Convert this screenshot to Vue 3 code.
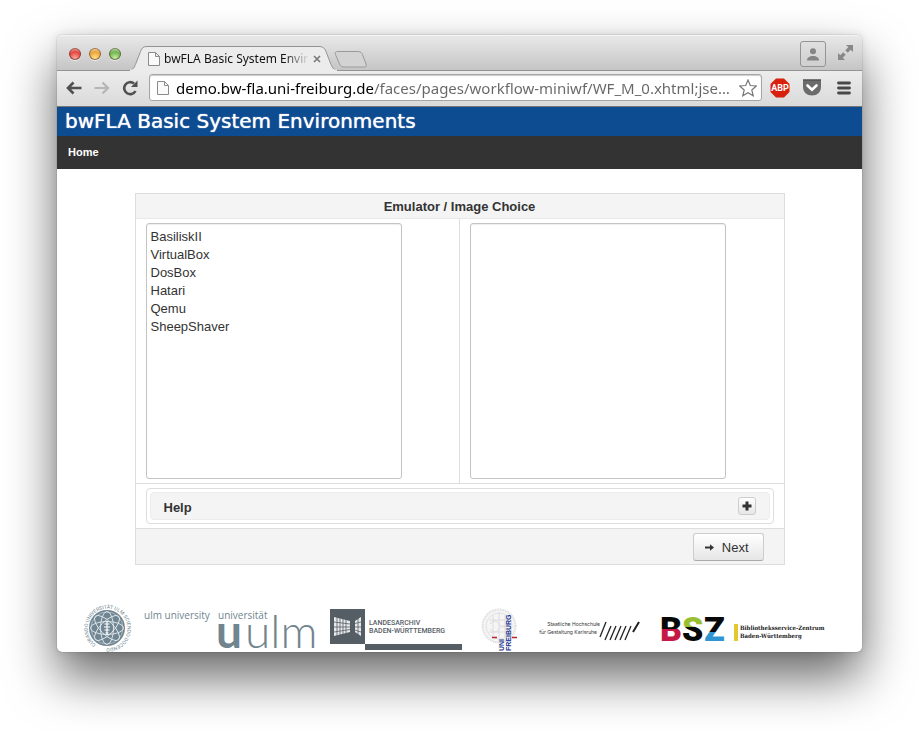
<script setup>
import { ref } from 'vue'

const emulators = ['BasiliskII', 'VirtualBox', 'DosBox', 'Hatari', 'Qemu', 'SheepShaver']
const selected = ref('')
const address = ref('demo.bw-fla.uni-freiburg.de/faces/pages/workflow-miniwf/WF_M_0.xhtml;jse…')
const petals = [0, 45, 90, 135]
const strokes = [0, 1, 2, 3, 4, 5, 6]
</script>

<template>
  <div class="desktop">
    <div class="window">
      <div class="titlebar">
        <div class="lights">
          <button class="light red" aria-label="Close"></button>
          <button class="light amber" aria-label="Minimize"></button>
          <button class="light green" aria-label="Zoom"></button>
        </div>
        <div class="tab">
          <svg class="tab-shape" viewBox="0 0 212 25" width="212" height="25" aria-hidden="true">
            <path d="M0 24.5 C5 24.5 6 22 7.500 18.500 L12.500 5.500 C14 2 15 .5 19 .5 H191 C195 .5 196.500 2 198 5.500 L203 18.500 C204.500 22 206 24.500 211 24.500" fill="#ececec" stroke="#949494" />
            <path d="M2 24.500 H209" stroke="#ececec" stroke-width="2" />
          </svg>
          <svg class="doc" viewBox="0 0 12 14" width="12" height="14" aria-hidden="true">
            <path d="M.5 .5 H7.500 L11.500 4.500 V13.500 H.5 Z M7.500 .5 V4.500 H11.500" fill="#fafafa" stroke="#8b8b8b" />
          </svg>
          <span class="tab-title">bwFLA Basic System Environments</span>
          <button class="tab-close" aria-label="Close tab">
            <svg viewBox="0 0 8 8" width="8" height="8"><path d="M1 1 L7 7 M7 1 L1 7" stroke="#777" stroke-width="1.600" /></svg>
          </button>
        </div>
        <button class="new-tab" aria-label="New tab">
          <svg viewBox="0 0 34 17" width="34" height="17">
            <path d="M3.500 .5 H24 C26.500 .5 27.500 1.500 28.500 3.500 L32 13 C32.700 15 32 16 30.500 16 H10 C7.500 16 6.500 15 5.500 13 L1.500 3.500 C.8 1.500 1.500 .5 3.500 .5 Z" fill="#d3d3d3" stroke="#9a9a9a" />
          </svg>
        </button>
        <div class="spacer"></div>
        <button class="profile" aria-label="Profile">
          <svg viewBox="0 0 14 13" width="14" height="13"><circle cx="7" cy="3.200" r="3" fill="#858585" /><path d="M1 12.500 C1 9.500 3.500 8 7 8 C10.500 8 13 9.500 13 12.500 Z" fill="#858585" /></svg>
        </button>
        <button class="expand" aria-label="Full screen">
          <svg viewBox="0 0 15 15" width="15" height="15" fill="#888"><path d="M8 0 H15 V7 L12.700 4.700 L9.700 7.700 L7.300 5.300 L10.300 2.300 Z" /><path d="M0 8 L2.300 10.300 L5.300 7.300 L7.700 9.700 L4.700 12.700 L7 15 H0 Z" /></svg>
        </button>
      </div>

      <div class="toolbar">
        <button class="nav" aria-label="Back">
          <svg viewBox="0 0 16 14" width="16" height="14"><path d="M7.500 1.500 L2 7 L7.500 12.500 M2.500 7 H15.500" fill="none" stroke="#505050" stroke-width="2.600" /></svg>
        </button>
        <button class="nav" aria-label="Forward">
          <svg viewBox="0 0 16 14" width="16" height="14"><path d="M8.500 1.500 L14 7 L8.500 12.500 M13.500 7 H.5" fill="none" stroke="#b5b5b5" stroke-width="2.200" /></svg>
        </button>
        <button class="nav" aria-label="Reload">
          <svg viewBox="0 0 16 16" width="16" height="16"><path d="M13.500 11 A6 6 0 1 1 12 3.500" fill="none" stroke="#505050" stroke-width="2.600" /><path d="M15.500 .5 V7 H9 Z" fill="#505050" /></svg>
        </button>
        <div class="omnibox">
          <svg class="doc" viewBox="0 0 12 14" width="12" height="14" aria-hidden="true">
            <path d="M.5 .5 H7.500 L11.500 4.500 V13.500 H.5 Z M7.500 .5 V4.500 H11.500" fill="#fafafa" stroke="#8b8b8b" />
          </svg>
          <input v-model="address" class="address" type="text" aria-label="Address" spellcheck="false" />
          <button class="star" aria-label="Bookmark">
            <svg viewBox="0 0 18 18" width="18" height="18"><path d="M9 1 L11.300 6.500 L17.300 7 L12.800 11 L14.200 16.800 L9 13.700 L3.800 16.800 L5.200 11 L.7 7 L6.700 6.500 Z" fill="#fff" stroke="#777" stroke-width="1.200" /></svg>
          </button>
        </div>
        <button class="nav abp" aria-label="Adblock Plus">
          <svg viewBox="0 0 20 20" width="20" height="20"><path d="M6 .5 H14 L19.500 6 V14 L14 19.500 H6 L.5 14 V6 Z" fill="#d8210d" /><text x="10" y="13" text-anchor="middle" class="abp-text">ABP</text></svg>
        </button>
        <button class="nav pocket" aria-label="Pocket">
          <svg viewBox="0 0 20 17" width="20" height="17"><path d="M1 .5 H19 V8 C19 13 15 16.500 10 16.500 C5 16.500 1 13 1 8 Z" fill="#6b6b6b" /><path d="M1 1 H19" stroke="#444" /><path d="M5.500 6.500 L10 10.800 L14.500 6.500" fill="none" stroke="#fff" stroke-width="2.600" stroke-linecap="round" /></svg>
        </button>
        <button class="nav menu" aria-label="Menu">
          <svg viewBox="0 0 14 14" width="14" height="14"><path d="M1.500 2 H12.500 M1.500 7 H12.500 M1.500 12 H12.500" stroke="#484848" stroke-width="2.800" stroke-linecap="round" /></svg>
        </button>
      </div>

      <header class="banner"><h1>bwFLA Basic System Environments</h1></header>
      <nav class="site-nav"><a href="#">Home</a></nav>

      <main>
        <section class="panel">
          <h2>Emulator / Image Choice</h2>
          <div class="choices">
            <div class="cell">
              <select v-model="selected" size="14" aria-label="Emulator">
                <option v-for="name in emulators" :key="name" :value="name">{{ name }}</option>
              </select>
            </div>
            <div class="cell">
              <select size="14" aria-label="Image"></select>
            </div>
          </div>
          <div class="help-row">
            <div class="help">
              <div class="help-head">
                <span>Help</span>
                <button class="toggle" aria-label="Expand help">
                  <svg viewBox="0 0 10 10" width="10" height="10"><path d="M5 .5 V9.500 M.5 5 H9.500" stroke="#333" stroke-width="3" /></svg>
                </button>
              </div>
            </div>
          </div>
          <div class="actions">
            <button class="next">
              <svg viewBox="0 0 9 7" width="9" height="7" aria-hidden="true"><path d="M0 2.500 H5 V.3 L9 3.500 L5 6.700 V4.500 H0 Z" fill="#333" /></svg>
              <span>Next</span>
            </button>
          </div>
        </section>
      </main>

      <footer class="partners">
        <svg class="seal" viewBox="0 0 48 48" width="48" height="48" role="img" aria-label="Universität Ulm seal">
          <defs><path id="ring" d="M13 40.500 A19.800 19.800 0 1 1 13.500 40.850" /></defs>
          <circle cx="24" cy="24" r="18" fill="#6f8592" />
          <g fill="none" stroke="#e4eaed" stroke-width=".9">
            <ellipse v-for="a in petals" :key="a" cx="24" cy="24" rx="16.500" ry="6.500" :transform="`rotate(${a} 24 24)`" />
            <circle cx="24" cy="24" r="16" stroke-width=".5" />
          </g>
          <path d="M24 17 V31 M21.500 20 H26.500 M21 23 H27 M21.500 26 H26.500 M22.500 29 H25.500" stroke="#fff" stroke-width="1.200" />
          <text class="ring-text"><textPath href="#ring">CURANDO·UNIVERSITÄT ULM·SCIENDO·DOCENDO</textPath></text>
        </svg>

        <svg class="uulm" viewBox="0 0 173 48" width="173" height="48" role="img" aria-label="ulm university universität uulm">
          <g fill="#71858f">
            <text x="0" y="15" class="uulm-small">ulm university</text>
            <text x="74" y="15" class="uulm-small">universität</text>
            <text x="72" y="44" class="uulm-bold">u</text>
            <text x="101" y="44" class="uulm-thin">ulm</text>
          </g>
        </svg>

        <svg class="archive" viewBox="0 0 137 48" width="137" height="48" role="img" aria-label="Landesarchiv Baden-Württemberg">
          <rect x="0" y="5" width="35" height="35" fill="#555e65" />
          <path d="M4 13 L20 17 V28 L4 32 Z M31 13 L25 17 V28 L31 32 Z" fill="#e8eaeb" />
          <path d="M7 13 V32 M10 14 V31 M13 15 V30 M16 16 V29 M4 18 L20 20 M4 23 H20 M4 28 L20 25.500 M28 14 V31 M31 18 L23 20 M31 23 H23 M31 28 L23 25.500" stroke="#555e65" stroke-width=".8" />
          <rect x="35" y="40" width="97" height="6" fill="#555e65" />
          <text x="39" y="21" class="archive-text">LANDESARCHIV</text>
          <text x="39" y="29" class="archive-text">BADEN-WÜRTTEMBERG</text>
        </svg>

        <svg class="freiburg" viewBox="0 0 44 48" width="44" height="48" role="img" aria-label="Uni Freiburg">
          <g fill="none" stroke="#dcdcdf">
            <circle cx="19" cy="22" r="16.500" stroke-width="2" stroke-dasharray="1 .7" fill="#f5f5f6" />
            <circle cx="19" cy="22" r="13" stroke-width=".8" />
            <path d="M13 11 V33 M25 11 V33 M9 16 H29 M9 28 H29 M19 8 V34 M10 20 Q15 14 19 20 T28 20 M10 25 Q15 31 19 25 T28 25" />
          </g>
          <path d="M12 33.500 H17 M32 33.500 H37" stroke="#b92431" stroke-width="1.500" />
          <text transform="translate(24 47) rotate(-90)" class="uni">UNI</text>
          <text transform="translate(31 47) rotate(-90)" class="uni">FREIBURG</text>
        </svg>

        <svg class="hfg" viewBox="0 0 110 48" width="110" height="48" role="img" aria-label="Staatliche Hochschule für Gestaltung Karlsruhe">
          <text x="63" y="22" text-anchor="end" class="hfg-text">Staatliche Hochschule</text>
          <text x="60" y="30" text-anchor="end" class="hfg-text">für Gestaltung Karlsruhe</text>
          <path v-for="n in strokes" :key="n" :d="n === 0 ? 'M63 33 L69 18' : n === 6 ? 'M96 28 L102 18' : `M${63 + n * 5} 36 L${69 + n * 5} 22`" stroke="#222" :stroke-width="n === 6 ? 2 : 1.3" />
        </svg>

        <svg class="bsz" viewBox="0 0 173 48" width="173" height="48" role="img" aria-label="BSZ Bibliotheksservice-Zentrum Baden-Württemberg">
          <defs>
            <linearGradient id="b-fill" x1="0" y1="14" x2="0" y2="38" gradientUnits="userSpaceOnUse"><stop offset=".46" stop-color="#080808" /><stop offset=".46" stop-color="#c41846" /></linearGradient>
            <linearGradient id="s-fill" x1="0" y1="14" x2="0" y2="38" gradientUnits="userSpaceOnUse"><stop offset=".38" stop-color="#98bf2f" /><stop offset=".38" stop-color="#080808" /></linearGradient>
            <linearGradient id="z-fill" x1="0" y1="14" x2="0" y2="38" gradientUnits="userSpaceOnUse"><stop offset=".58" stop-color="#080808" /><stop offset=".58" stop-color="#2f94d2" /></linearGradient>
          </defs>
          <text x="0" y="37" class="bsz-letter" fill="url(#b-fill)">B</text>
          <text x="22" y="37" class="bsz-letter" fill="url(#s-fill)">S</text>
          <text x="44" y="37" class="bsz-letter" fill="url(#z-fill)">Z</text>
          <rect x="74" y="20" width="4" height="17" fill="#e3c92c" />
          <text x="80" y="26" class="bsz-text">Bibliotheksservice-Zentrum</text>
          <text x="80" y="34" class="bsz-text">Baden-Württemberg</text>
        </svg>
      </footer>
    </div>
  </div>
</template>

<style>
body {
  background: #fff;
}
</style>

<style scoped>
* {
  box-sizing: border-box;
}
.desktop {
  padding: 35px 57px 79px;
  overflow: hidden;
  font-family: "Liberation Sans", Arial, sans-serif;
  font-size: 13px;
  color: #333;
}
button {
  margin: 0;
  padding: 0;
  border: 0;
  background: none;
  font: inherit;
  color: inherit;
}
svg {
  display: block;
}
.window {
  border-radius: 5px;
  background: #fff;
  box-shadow: 0 0 1px rgba(0, 0, 0, 0.6), 0 0 10px rgba(0, 0, 0, 0.1), 0 25px 50px rgba(0, 0, 0, 0.6);
}
.titlebar {
  display: flex;
  align-items: flex-end;
  height: 36px;
  padding: 0 9px 0 12px;
  border-bottom: 1px solid #949494;
  border-radius: 5px 5px 0 0;
  background: linear-gradient(#e9e9e9, #c5c5c5);
  box-shadow: inset 0 1px #f4f4f4;
}
.lights {
  display: flex;
  gap: 8px;
  padding-bottom: 10px;
}
.light {
  width: 12px;
  height: 12px;
  border: 1px solid rgba(60, 30, 20, 0.5);
  border-radius: 50%;
  box-shadow: 0 1px #eee;
}
.red {
  background: radial-gradient(circle at 50% 90%, #ffaaa0, #e4443f 60%, #f3b5b0);
}
.amber {
  background: radial-gradient(circle at 50% 90%, #ffe58c, #eba23c 60%, #f9dfb8);
}
.green {
  background: radial-gradient(circle at 50% 90%, #c8f0a0, #6fb350 60%, #d0e8c4);
}
.tab {
  position: relative;
  display: flex;
  align-items: center;
  width: 212px;
  height: 25px;
  margin: 0 0 -1px 7px;
  padding: 0 12px 0 20px;
}
.tab-shape {
  position: absolute;
  inset: 0;
}
.doc,
.tab-title,
.tab-close {
  position: relative;
  flex: none;
}
.tab-title {
  width: 144px;
  margin: 0 5px 0 4px;
  overflow: hidden;
  white-space: nowrap;
  font: 12px/18px "Noto Sans", sans-serif;
  color: #111;
  -webkit-mask-image: linear-gradient(to right, #000 120px, transparent 146px);
  mask-image: linear-gradient(to right, #000 120px, transparent 146px);
}
.new-tab {
  margin-left: -6px;
  padding-bottom: 2px;
}
.spacer {
  flex: 1;
}
.profile {
  display: grid;
  place-items: center;
  width: 26px;
  height: 26px;
  margin: 0 12px 3px 0;
  border: 1px solid #949494;
  border-radius: 3px;
  background: linear-gradient(#e0e0e0, #cfcfcf);
}
.expand {
  padding-bottom: 10px;
}
.toolbar {
  display: flex;
  align-items: center;
  height: 36px;
  padding: 0 11px 2px 9px;
  border-bottom: 1px solid #777;
  background: linear-gradient(#ececec, #dadada);
}
.nav {
  display: grid;
  place-items: center;
  width: 16px;
  height: 20px;
  margin-right: 12px;
  flex: none;
}
.omnibox {
  display: flex;
  flex: 1;
  align-items: center;
  min-width: 0;
  height: 27px;
  padding: 0 4px 0 7px;
  margin: 0 8px 0 -1px;
  border: 1px solid #a5a5a5;
  border-radius: 3px;
  background: #fff;
  box-shadow: inset 0 1px 1px #ccc;
}
.address {
  flex: 1;
  min-width: 0;
  height: 22px;
  margin-left: 7px;
  padding: 0;
  border: 0;
  outline: 0;
  font: 15px/22px "Noto Sans", sans-serif;
  color: transparent;
  background: linear-gradient(to right, #000 197px, #666 197px);
  -webkit-background-clip: text;
  background-clip: text;
}
.abp {
  width: 20px;
}
.abp-text {
  font: bold 9px Roboto, sans-serif;
  fill: #fff;
}
.pocket {
  width: 20px;
  margin-right: 15px;
}
.menu {
  width: 14px;
  margin-right: 0;
}
.banner {
  padding: 0 8px;
  background: #0e4c92;
}
h1 {
  margin: 0;
  font: 20px/29px "DejaVu Sans", Verdana, sans-serif;
  color: #fff;
  text-shadow: 0 0 1px #fff;
}
.site-nav {
  padding: 0 11px;
  background: #333;
}
.site-nav a {
  font-size: 11px;
  font-weight: bold;
  line-height: 33px;
  color: #fff;
  text-decoration: none;
}
main {
  padding: 24px 20px;
}
.panel {
  max-width: 650px;
  margin: 0 auto;
  border: 1px solid #ddd;
}
h2 {
  margin: 0;
  padding-top: 2px;
  border-bottom: 1px solid #e8e8e8;
  background: #f4f4f4;
  font-size: 13px;
  line-height: 22px;
  text-align: center;
}
.choices {
  display: grid;
  grid-template-columns: 1fr 1fr;
}
.cell {
  padding: 4px 10px;
}
.cell:first-child {
  border-right: 1px solid #ddd;
}
select {
  display: block;
  width: 256px;
  max-width: 100%;
  height: 256px;
  padding: 5px 0 3px;
  border: 1px solid #c4c4c4;
  border-radius: 3px;
  outline: 0;
  background: #fff;
  box-shadow: inset 0 1px 1px #eee;
  font: 13px/18px "Liberation Sans", Arial, sans-serif;
  color: #333;
  overflow: hidden;
}
option {
  min-height: 18px;
  padding: 0 4px;
  line-height: 18px;
}
.help-row {
  padding: 4px 10px;
  border-top: 1px solid #ddd;
}
.help {
  padding: 3px;
  border: 1px solid #ddd;
  border-radius: 4px;
}
.help-head {
  display: flex;
  align-items: center;
  justify-content: space-between;
  height: 28px;
  padding: 0 13px;
  border: 1px solid #ececec;
  border-radius: 4px;
  background: #f4f4f4;
  font-weight: bold;
}
.help-head span {
  padding-top: 2px;
}
.toggle {
  display: grid;
  place-items: center;
  width: 18px;
  height: 18px;
  border: 1px solid #ccc;
  border-radius: 3px;
  background: linear-gradient(#fff, #e6e6e6);
}
.actions {
  display: flex;
  justify-content: flex-end;
  padding: 4px 20px 3px;
  border-top: 1px solid #ddd;
  background: #f4f4f4;
}
.next {
  display: flex;
  align-items: center;
  gap: 8px;
  height: 28px;
  padding: 0 14px 0 11px;
  border: 1px solid #ccc;
  border-bottom-color: #aaa;
  border-radius: 3px;
  background: linear-gradient(#fff, #e6e6e6);
}
.partners {
  display: flex;
  justify-content: space-between;
  padding: 15px 29px 0 26px;
}
.partners svg {
  flex: none;
  overflow: visible;
}
.ring-text {
  font: 5px Roboto, sans-serif;
  fill: #71858f;
}
.uulm-small {
  font: 10px "Open Sans", sans-serif;
}
.uulm-bold {
  font: bold 46px Lato, sans-serif;
}
.uulm-thin {
  font: 300 46px Lato, sans-serif;
}
.archive-text {
  font: 500 7px Roboto, sans-serif;
  fill: #555e65;
}
.uni {
  font: bold 7px "Liberation Sans", sans-serif;
  fill: #20338c;
}
.hfg-text {
  font: 5px Inter, sans-serif;
  fill: #333;
}
.bsz-letter {
  font: 900 34px Roboto, sans-serif;
}
.bsz-text {
  font: bold 6px "DejaVu Serif Condensed", "DejaVu Serif", serif;
  fill: #222;
}
</style>
